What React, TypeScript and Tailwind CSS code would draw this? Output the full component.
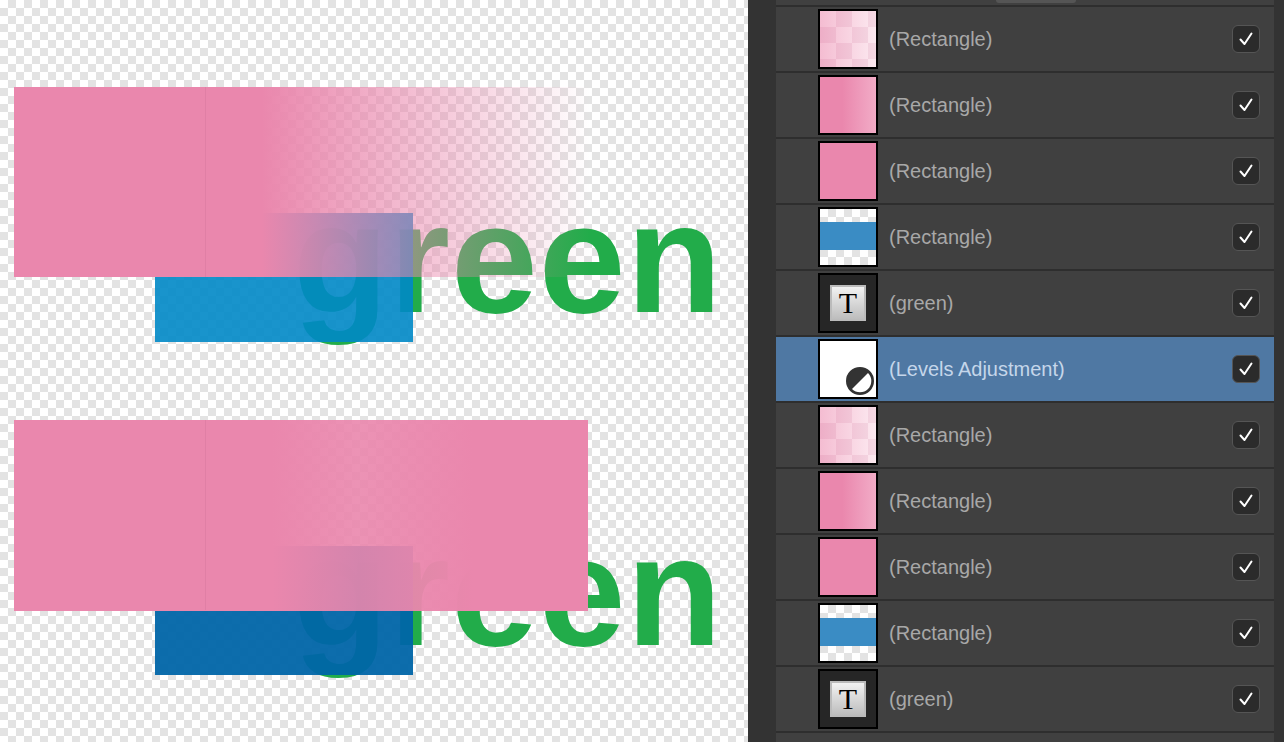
import React from "react";

const checker = "bg-[conic-gradient(#e3e3e3_25%,#ffffff_0_50%,#e3e3e3_0_75%,#ffffff_0)] bg-[length:16px_16px]";

function Group({ top, faded }: { top: number; faded: boolean }) {
  return (
    <div className="absolute left-0 w-[748px] h-[300px]" style={{ top }}>
      <div className="absolute left-[293px] top-[93px] text-[156px] leading-none font-bold text-[#22ac4a] tracking-[1px]" style={{ fontFamily: '"Liberation Sans", Arial, sans-serif' }}>green</div>
      <div className={`absolute left-[155px] top-[126px] w-[258px] h-[129px] ${faded ? "bg-[#0088c6]/90" : "bg-[#0065a8]/95"}`} />
      {faded ? (
        <div className="absolute left-[14px] top-0 w-[576px] h-[190px] bg-[linear-gradient(to_right,rgba(234,135,173,1)_0%,rgba(234,135,173,1)_43%,rgba(234,135,173,0)_100%)]" />
      ) : (
        <div className="absolute left-[14px] top-0 w-[574px] h-[191px] bg-[linear-gradient(to_right,rgba(234,135,173,1)_0%,rgba(234,135,173,1)_45%,rgba(234,135,173,0.9)_60%,rgba(234,135,173,1)_80%)]" />
      )}
      <div className="absolute left-[205px] top-0 w-px h-[190px] bg-[#d97aa0]/60" />
    </div>
  );
}

function Check() {
  return (
    <div className="w-[28px] h-[28px] rounded-[6px] bg-[#2b2b2b] border border-[#555] flex items-center justify-center">
      <svg width="16" height="16" viewBox="0 0 16 16"><path d="M2.5 8.5 L6.5 13 L13.5 2.5" fill="none" stroke="#fff" strokeWidth="2" strokeLinecap="round" strokeLinejoin="round" /></svg>
    </div>
  );
}

function Thumb({ kind }: { kind: string }) {
  const base = "w-[60px] h-[60px] border-2 border-black overflow-hidden relative shrink-0";
  if (kind === "faded")
    return <div className={`${base} bg-[conic-gradient(#f0c8d8_25%,#fbe0ea_0_50%,#f0c8d8_0_75%,#fbe0ea_0)] bg-[length:32px_32px]`}><div className="absolute inset-0 bg-[linear-gradient(to_right,rgba(234,135,173,0.4),rgba(255,255,255,0.3))]" /></div>;
  if (kind === "grad")
    return <div className={`${base} bg-[linear-gradient(to_right,#ea87ad,#ea87ad_40%,#f2acc7)]`} />;
  if (kind === "pink") return <div className={`${base} bg-[#ea87ad]`} />;
  if (kind === "blue")
    return <div className={`${base} ${checker}`}><div className="absolute left-0 right-0 top-[13px] h-[28px] bg-[#3a8cc4]" /></div>;
  if (kind === "text")
    return (
      <div className={`${base} bg-[#262626] flex items-center justify-center`}>
        <div className="w-[36px] h-[36px] border-2 border-[#bbb] bg-[linear-gradient(to_bottom,#f2f2f2,#bdbdbd)] flex items-center justify-center text-black text-[30px] leading-none" style={{ fontFamily: '"Liberation Serif", serif' }}>T</div>
      </div>
    );
  return (
    <div className={`${base} bg-white`}>
      <svg className="absolute right-[2px] bottom-[2px]" width="28" height="28" viewBox="0 0 28 28">
        <circle cx="14" cy="14" r="13" fill="#333" />
        <path d="M22 6 A11 11 0 0 1 6 22 Z" fill="#fff" transform="translate(0,0)" />
        <circle cx="14" cy="14" r="13" fill="none" stroke="#333" strokeWidth="2" />
      </svg>
    </div>
  );
}

const rows = [
  ["faded", "(Rectangle)"], ["grad", "(Rectangle)"], ["pink", "(Rectangle)"], ["blue", "(Rectangle)"], ["text", "(green)"],
  ["levels", "(Levels Adjustment)"],
  ["faded", "(Rectangle)"], ["grad", "(Rectangle)"], ["pink", "(Rectangle)"], ["blue", "(Rectangle)"], ["text", "(green)"],
];

export default function App() {
  return (
    <div className="w-[1284px] h-[742px] flex overflow-hidden" style={{ fontFamily: '"Liberation Sans", Arial, sans-serif' }}>
      <div className={`relative w-[748px] h-full ${checker}`}>
        <Group top={87} faded />
        <Group top={420} faded={false} />
      </div>
      <div className="w-[28px] h-full bg-[#333]" />
      <div className="w-[498px] h-full bg-[#404040] flex flex-col">
        <div className="h-[7px] relative border-b-2 border-[#2e2e2e]">
          <div className="absolute left-[220px] w-[80px] h-[3px] bg-[#555] rounded-b" />
        </div>
        {rows.map(([k, t], i) => (
          <div key={i} className={`h-[66px] shrink-0 flex items-center border-b-2 border-[#2e2e2e] pl-[42px] pr-[14px] ${k === "levels" ? "bg-[#4f78a3]" : ""}`}>
            <Thumb kind={k} />
            <div className={`ml-[11px] flex-1 text-[20px] ${k === "levels" ? "text-[#c5d6ea]" : "text-[#a8a8a8]"}`}>{t}</div>
            <Check />
          </div>
        ))}
      </div>
      <div className="w-[10px] h-full bg-[#333]" />
    </div>
  );
}
